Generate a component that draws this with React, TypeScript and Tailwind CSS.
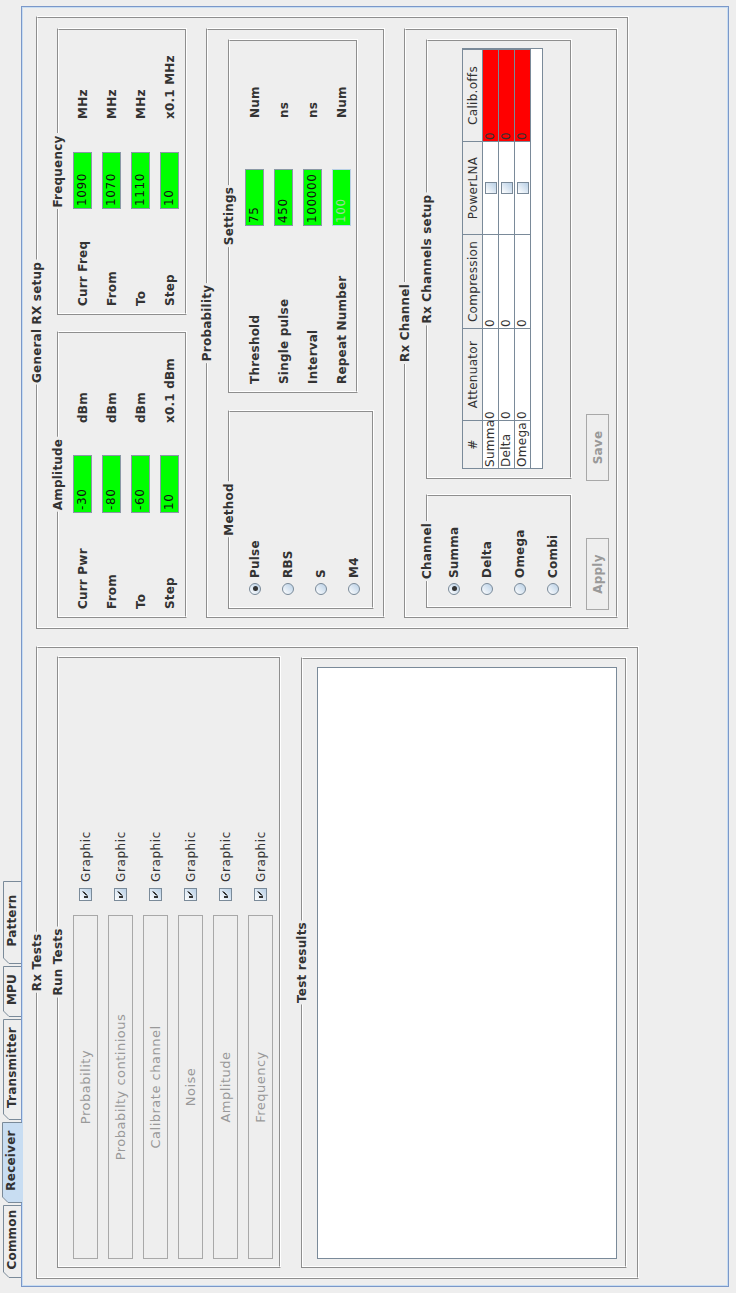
import React from 'react';

// The whole Swing window is shown turned a quarter turn to the left,
// so it is laid out upright here (1293 x 736) and rotated as one piece.

function Group({ title, className = '', children }: { title: string; className?: string; children?: React.ReactNode }) {
  return (
    <div className={`relative shrink-0 border border-t-[#8e8e8e] border-l-[#8e8e8e] border-r-white border-b-white ${className}`}>
      <div className="pointer-events-none absolute inset-0 border border-t-white border-l-white border-r-[#8e8e8e] border-b-[#8e8e8e]" />
      <div className="absolute left-1/2 top-[-7px] -translate-x-1/2 whitespace-nowrap bg-[#eeeeee] px-[2px] text-[12px] font-bold leading-[14px] tracking-[0.2px] text-[#333333]">
        {title}
      </div>
      {children}
    </div>
  );
}

function Field({ value, w, dim }: { value: string; w: string; dim?: boolean }) {
  return (
    <div
      className={`h-[19px] shrink-0 border bg-[#00ff00] pl-[2px] text-[12px] leading-[17px] tracking-[0.6px] ${w} ${
        dim ? 'border-[#b8cfe5] text-[#9fd89f]' : 'border-[#8a98a6] text-[#111111]'
      }`}
    >
      {value}
    </div>
  );
}

type Row = { label: string; value: string; unit: string; dim?: boolean };

function ParamRows({ rows, labelW, fieldW, unitMl, pt }: { rows: Row[]; labelW: string; fieldW: string; unitMl: string; pt: string }) {
  return (
    <div className={`flex flex-col gap-[10px] pl-[8px] ${pt}`}>
      {rows.map((r) => (
        <div key={r.label} className="flex h-[19px] items-center">
          <span className={`shrink-0 text-[12px] font-bold tracking-[0.2px] text-[#333333] ${labelW}`}>{r.label}</span>
          <Field value={r.value} w={fieldW} dim={r.dim} />
          <span className={`whitespace-nowrap text-[12px] font-bold tracking-[0.2px] text-[#333333] ${unitMl}`}>{r.unit}</span>
        </div>
      ))}
    </div>
  );
}

function Radio({ label, checked }: { label: string; checked?: boolean }) {
  return (
    <div className="flex h-[14px] items-center">
      <div className="flex h-[12px] w-[12px] shrink-0 items-center justify-center rounded-full border border-[#7a8a99] bg-linear-to-br from-white to-[#b8cfe5]">
        {checked && <div className="h-[5px] w-[5px] rounded-full bg-[#333333]" />}
      </div>
      <span className="ml-[5px] text-[12px] font-bold tracking-[0.2px] text-[#333333]">{label}</span>
    </div>
  );
}

function Check({ checked, className = '' }: { checked?: boolean; className?: string }) {
  return (
    <div className={`relative h-[13px] w-[13px] shrink-0 border border-[#7a8a99] bg-linear-to-br from-white to-[#b8cfe5] ${className}`}>
      {checked && (
        <svg className="absolute left-0 top-0" width="11" height="11" viewBox="0 0 11 11">
          <rect x="2" y="4" width="2" height="4" fill="#333333" />
          <path d="M8.5 2.5 L4.5 6.5 M8.5 3.5 L4.5 7.5" stroke="#333333" strokeWidth="1" />
        </svg>
      )}
    </div>
  );
}

function Tab({ label, w, width, active }: { label: string; w: string; width: number; active?: boolean }) {
  const h = active ? 20 : 18;
  return (
    <div className={`relative flex shrink-0 items-center justify-center pl-[4px] ${w} ${active ? 'z-10 h-[20px] translate-y-[1px]' : 'h-[18px]'}`}>
      <svg className="absolute left-0 top-0" width={width} height={h}>
        <path
          d={`M0.5 ${h} V6 L6 0.5 H${width - 0.5} V${h}`}
          fill={active ? '#c8ddf2' : '#eeeeee'}
          stroke="#7a8a99"
        />
      </svg>
      <span className={`relative text-[12px] font-bold tracking-[0.2px] text-[#333333] ${active ? '-mt-[2px]' : ''}`}>{label}</span>
    </div>
  );
}

const tabs = [
  { label: 'Common', w: 'w-[73px]', width: 73 },
  { label: 'Receiver', w: 'w-[81px]', width: 81, active: true },
  { label: 'Transmitter', w: 'w-[101px]', width: 101 },
  { label: 'MPU', w: 'w-[51px]', width: 51 },
  { label: 'Pattern', w: 'w-[83px]', width: 83 },
];

const tests = ['Probability', 'Probabilty continious', 'Calibrate channel', 'Noise', 'Amplitude', 'Frequency'];

const amplitude: Row[] = [
  { label: 'Curr Pwr', value: '-30', unit: 'dBm' },
  { label: 'From', value: '-80', unit: 'dBm' },
  { label: 'To', value: '-60', unit: 'dBm' },
  { label: 'Step', value: '10', unit: 'x0.1 dBm' },
];

const frequency: Row[] = [
  { label: 'Curr Freq', value: '1090', unit: 'MHz' },
  { label: 'From', value: '1070', unit: 'MHz' },
  { label: 'To', value: '1110', unit: 'MHz' },
  { label: 'Step', value: '10', unit: 'x0.1 MHz' },
];

const settings: Row[] = [
  { label: 'Threshold', value: '75', unit: 'Num' },
  { label: 'Single pulse', value: '450', unit: 'ns' },
  { label: 'Interval', value: '100000', unit: 'ns' },
  { label: 'Repeat Number', value: '100', unit: 'Num', dim: true },
];

const columns = [
  { name: '#', w: 'w-[48px]' },
  { name: 'Attenuator', w: 'w-[92px]' },
  { name: 'Compression', w: 'w-[94px]' },
  { name: 'PowerLNA', w: 'w-[93px]' },
  { name: 'Calib.offs', w: 'w-[92px]' },
];

const channels = ['Summa', 'Delta', 'Omega'];

function ChannelTable() {
  return (
    <div className="h-[81px] w-[421px] overflow-hidden border border-[#7a8a99] bg-white text-[12px] tracking-[0.3px] text-[#333333]">
      <div className="flex h-[20px]">
        {columns.map((c) => (
          <div
            key={c.name}
            className={`flex h-[20px] shrink-0 items-center justify-center border-r border-b border-[#7a8a99] bg-[#eeeeee] ${c.w}`}
          >
            {c.name}
          </div>
        ))}
      </div>
      {channels.map((ch) => (
        <div key={ch} className="flex h-[16px]">
          <div className={`h-[16px] shrink-0 border-r border-b border-[#7a8a99] pl-[1px] leading-[15px] ${columns[0].w}`}>{ch}</div>
          <div className={`h-[16px] shrink-0 border-r border-b border-[#7a8a99] pl-[1px] leading-[15px] ${columns[1].w}`}>0</div>
          <div className={`h-[16px] shrink-0 border-r border-b border-[#7a8a99] pl-[1px] leading-[15px] ${columns[2].w}`}>0</div>
          <div className={`flex h-[16px] shrink-0 items-center justify-center border-r border-b border-[#7a8a99] ${columns[3].w}`}>
            <div className="h-[12px] w-[12px] border border-[#7a8a99] bg-linear-to-br from-white to-[#b8cfe5]" />
          </div>
          <div className={`h-[16px] shrink-0 border-r border-b border-[#7a8a99] bg-[#ff0000] pl-[1px] leading-[15px] ${columns[4].w}`}>0</div>
        </div>
      ))}
    </div>
  );
}

export default function App() {
  return (
    <div className="relative h-[1293px] w-[736px] overflow-hidden bg-[#eeeeee] font-['DejaVu_Sans',sans-serif]">
      <div className="absolute left-0 top-0 h-[736px] w-[1293px] origin-top-left [transform:translateY(1293px)_rotate(-90deg)]">
        {/* tab strip */}
        <div className="flex h-[21px] items-end gap-[2px] pl-[15px]">
          {tabs.map((t) => (
            <Tab key={t.label} {...t} />
          ))}
        </div>

        {/* tab content */}
        <div className="ml-[6px] h-[708px] w-[1281px] border border-[#7b98c9]">
          <div className="flex h-full items-start gap-[17px] border border-[#c8ddf2] pl-[6px] pt-[13px]">
            <Group title="Rx Tests" className="h-[603px] w-[633px]">
              <div className="flex flex-col gap-[20px] pl-[10px] pt-[20px]">
                <Group title="Run Tests" className="h-[224px] w-[612px]">
                  <div className="flex flex-col gap-[10px] pl-[8px] pt-[15px]">
                    {tests.map((t) => (
                      <div key={t} className="flex h-[25px] items-center">
                        <div className="flex h-[25px] w-[344px] shrink-0 items-center justify-center border border-[#a8a8a8] text-[13px] tracking-[0.5px] text-[#999999]">
                          {t}
                        </div>
                        <Check checked className="ml-[14px]" />
                        <span className="ml-[6px] text-[12px] tracking-[0.6px] text-[#333333]">Graphic</span>
                      </div>
                    ))}
                  </div>
                </Group>
                <Group title="Test results" className="h-[326px] w-[611px]">
                  <div className="pl-[8px] pt-[15px]">
                    <div className="h-[300px] w-[592px] border border-[#7a8a99] bg-white" />
                  </div>
                </Group>
              </div>
            </Group>

            <Group title="General RX setup" className="h-[593px] w-[613px]">
              <div className="flex flex-col gap-[19px] pl-[10px] pt-[20px]">
                <div className="flex gap-[16px]">
                  <Group title="Amplitude" className="h-[130px] w-[287px]">
                    <ParamRows rows={amplitude} labelW="w-[96px]" fieldW="w-[58px]" unitMl="ml-[32px]" pt="pt-[15px]" />
                  </Group>
                  <Group title="Frequency" className="h-[130px] w-[287px]">
                    <ParamRows rows={frequency} labelW="w-[97px]" fieldW="w-[57px]" unitMl="ml-[33px]" pt="pt-[15px]" />
                  </Group>
                </div>

                <Group title="Probability" className="h-[179px] w-[590px]">
                  <div className="flex items-start gap-[17px] pl-[8px] pt-[21px]">
                    <Group title="Method" className="h-[146px] w-[199px]">
                      <div className="flex flex-col gap-[19px] pl-[13px] pt-[19px]">
                        <Radio label="Pulse" checked />
                        <Radio label="RBS" />
                        <Radio label="S" />
                        <Radio label="M4" />
                      </div>
                    </Group>
                    <Group title="Settings" className="h-[130px] w-[354px]">
                      <ParamRows rows={settings} labelW="w-[158px]" fieldW="w-[57px]" unitMl="ml-[51px]" pt="pt-[16px]" />
                    </Group>
                  </div>
                </Group>

                <Group title="Rx Channel" className="h-[214px] w-[590px]">
                  <div className="flex flex-col pl-[9px] pt-[21px]">
                    <div className="flex items-start gap-[15px]">
                      <Group title="Channel" className="h-[146px] w-[114px]">
                        <div className="flex flex-col gap-[19px] pl-[12px] pt-[20px]">
                          <Radio label="Summa" checked />
                          <Radio label="Delta" />
                          <Radio label="Omega" />
                          <Radio label="Combi" />
                        </div>
                      </Group>
                      <Group title="Rx Channels setup" className="h-[146px] w-[440px]">
                        <div className="pl-[9px] pt-[35px]">
                          <ChannelTable />
                        </div>
                      </Group>
                    </div>
                    <div className="mt-[14px] flex">
                      <div className="-ml-[2px] flex h-[23px] w-[72px] items-center justify-center border border-[#a8a8a8] text-[12px] font-bold tracking-[0.2px] text-[#999999]">
                        Apply
                      </div>
                      <div className="ml-[57px] flex h-[23px] w-[67px] items-center justify-center border border-[#a8a8a8] text-[12px] font-bold tracking-[0.2px] text-[#999999]">
                        Save
                      </div>
                    </div>
                  </div>
                </Group>
              </div>
            </Group>
          </div>
        </div>
      </div>
    </div>
  );
}
